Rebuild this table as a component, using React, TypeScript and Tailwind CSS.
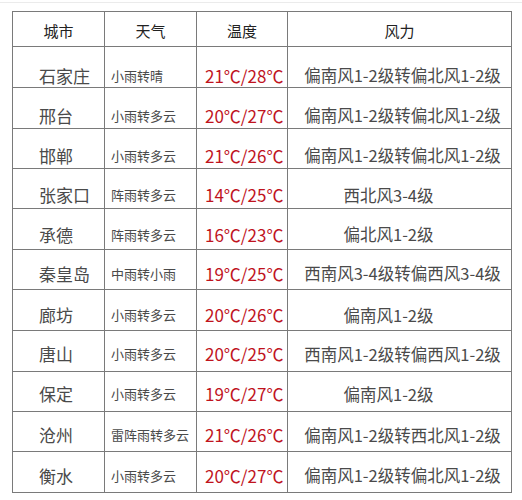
const rows = [
  { city: '石家庄', weather: '小雨转晴', temp: '21℃/28℃', wind: '偏南风1-2级转偏北风1-2级', h: 'h-[41px]', pt: 'pt-[16px]', wp: 'pl-[6px]' },
  { city: '邢台', weather: '小雨转多云', temp: '20℃/27℃', wind: '偏南风1-2级转偏北风1-2级', h: 'h-[41px]', pt: 'pt-[15px]', wp: 'pl-[6px]' },
  { city: '邯郸', weather: '小雨转多云', temp: '21℃/26℃', wind: '偏南风1-2级转偏北风1-2级', h: 'h-[40px]', pt: 'pt-[14px]', wp: 'pl-[6px]' },
  { city: '张家口', weather: '阵雨转多云', temp: '14℃/25℃', wind: '西北风3-4级', h: 'h-[40px]', pt: 'pt-[13px]', wp: 'pr-[22px]' },
  { city: '承德', weather: '阵雨转多云', temp: '16℃/23℃', wind: '偏北风1-2级', h: 'h-[41px]', pt: 'pt-[11px]', wp: 'pr-[22px]' },
  { city: '秦皇岛', weather: '中雨转小雨', temp: '19℃/25℃', wind: '西南风3-4级转偏西风3-4级', h: 'h-[40px]', pt: 'pt-[8px]', wp: 'pl-[6px]' },
  { city: '廊坊', weather: '小雨转多云', temp: '20℃/26℃', wind: '偏南风1-2级', h: 'h-[41px]', pt: 'pt-[10px]', wp: 'pr-[22px]' },
  { city: '唐山', weather: '小雨转多云', temp: '20℃/25℃', wind: '西南风1-2级转偏西风1-2级', h: 'h-[41px]', pt: 'pt-[6px]', wp: 'pl-[6px]' },
  { city: '保定', weather: '小雨转多云', temp: '19℃/27℃', wind: '偏南风1-2级', h: 'h-[40px]', pt: 'pt-[5px]', wp: 'pr-[22px]' },
  { city: '沧州', weather: '雷阵雨转多云', temp: '21℃/26℃', wind: '偏南风1-2级转西北风1-2级', h: 'h-[40px]', pt: 'pt-[7px]', wp: 'pl-[6px]' },
  { city: '衡水', weather: '小雨转多云', temp: '20℃/27℃', wind: '偏南风1-2级转偏北风1-2级', h: 'h-[40px]', pt: 'pt-[7px]', wp: 'pl-[6px]' },
];

const font = "font-['Noto_Sans_CJK_SC','Noto_Sans',sans-serif]";

export default function App() {
  return (
    <div className={`w-[522px] h-[500px] bg-white ${font}`}>
      {/* faint rule along the top */}
      <div className="pt-[2px]">
        <div className="h-px bg-[#ebebeb]" />
      </div>

      <div className="ml-[12px] mt-[8px] w-[500px] border border-[#7a7a7a] divide-y divide-[#7a7a7a]">
        {/* Header */}
        <div className="grid grid-cols-[92px_92px_91px_1fr] h-[35px] text-[15px] text-[#222]">
          <div className="flex items-center justify-center pt-[4px] border-r border-[#7a7a7a]">城市</div>
          <div className="flex items-center justify-center pt-[4px] border-r border-[#7a7a7a]">天气</div>
          <div className="flex items-center justify-center pt-[4px] border-r border-[#7a7a7a]">温度</div>
          <div className="flex items-center justify-center pt-[4px]">风力</div>
        </div>

        {rows.map((r) => (
          <div key={r.city} className={`grid grid-cols-[92px_92px_91px_1fr] text-[#4a4a4a] ${r.h}`}>
            <div className={`flex items-center pl-[26px] border-r border-[#7a7a7a] text-[17px] ${r.pt}`}>
              {r.city}
            </div>
            <div className={`flex items-center pl-[6px] border-r border-[#7a7a7a] text-[13px] whitespace-nowrap ${r.pt}`}>
              {r.weather}
            </div>
            <div className={`flex items-center pl-[8px] border-r border-[#7a7a7a] text-[17px] text-[#c0141e] whitespace-nowrap ${r.pt}`}>
              {r.temp}
            </div>
            <div className={`flex items-center justify-center text-[16.5px] whitespace-nowrap ${r.wp} ${r.pt}`}>
              {r.wind}
            </div>
          </div>
        ))}
      </div>
    </div>
  );
}
